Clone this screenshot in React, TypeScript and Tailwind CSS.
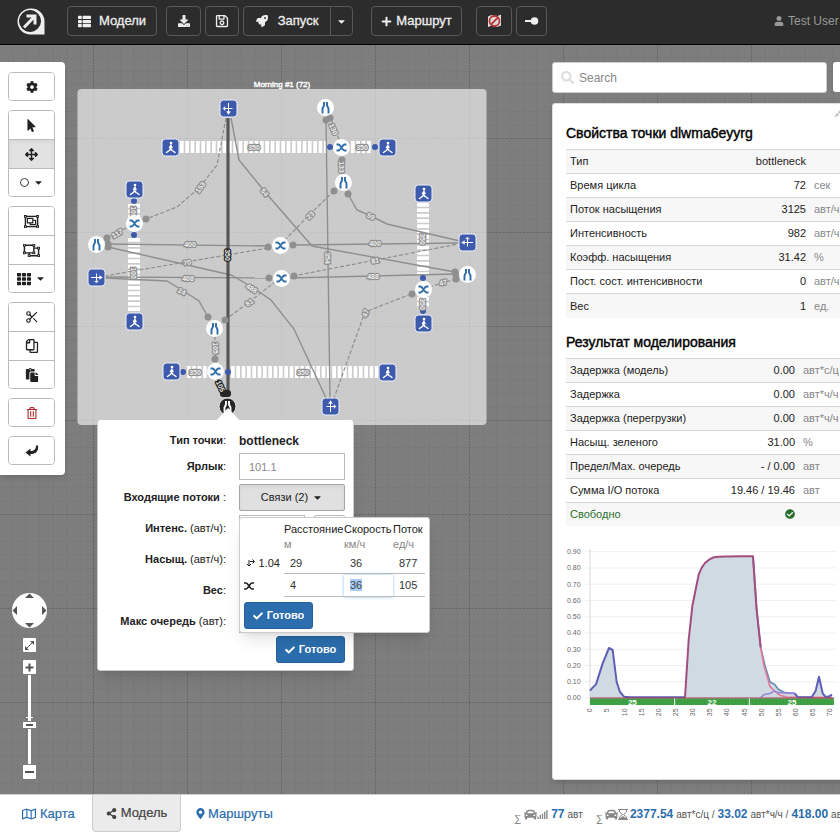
import { useEffect, useRef } from "react";
import type { ReactNode } from "react";
import {
  FaArrowsAlt, FaCar, FaCaretDown, FaCheck, FaCheckCircle, FaCog, FaDownload,
  FaMapMarkerAlt, FaMousePointer, FaPaste, FaPlus, FaRegCircle, FaRegCopy, FaRegMap,
  FaRegObjectGroup, FaRegObjectUngroup, FaRegSave, FaRegTrashAlt, FaRocket, FaSearch, FaShareAlt,
  FaSignal, FaTh, FaThList, FaUser, FaCompressAlt,
} from "react-icons/fa";
import { Scissors } from "lucide-react";

type Point = [number, number];
type NodeKind = "ped" | "right" | "left" | "up" | "down";

/* ---------- network diagram data ---------- */

const squares: { at: Point; kind: NodeKind }[] = [
  { at: [228, 108], kind: "down" },
  { at: [170, 147], kind: "ped" },
  { at: [387, 147], kind: "ped" },
  { at: [134, 189], kind: "ped" },
  { at: [423, 193], kind: "ped" },
  { at: [467, 242], kind: "left" },
  { at: [96, 277], kind: "right" },
  { at: [134, 321], kind: "ped" },
  { at: [423, 323], kind: "ped" },
  { at: [171, 371], kind: "ped" },
  { at: [387, 372], kind: "ped" },
  { at: [330, 406], kind: "up" },
];

const bottles: Point[] = [[325, 107], [343, 182], [96, 244], [467, 274], [214, 328]];
const crosses: Point[] = [[341, 147], [134, 223], [280, 245], [281, 278], [423, 289], [215, 371]];

const crosswalks: { from: Point; to: Point }[] = [
  { from: [180, 147], to: [327, 147] },
  { from: [351, 147], to: [372, 147] },
  { from: [134, 204], to: [134, 217] },
  { from: [134, 238], to: [134, 311] },
  { from: [423, 203], to: [423, 275] },
  { from: [423, 297], to: [423, 308] },
  { from: [187, 372], to: [208, 372] },
  { from: [231, 372], to: [378, 372] },
];

const links: { d: string; dashed?: boolean }[] = [
  { d: "M226 118L217 165L199 188L177 207L146 219", dashed: true },
  { d: "M231 118L239 160L265 192L312 246L455 272" },
  { d: "M326 118L330 398" },
  { d: "M331 119L340 142", dashed: true },
  { d: "M342 158V174" },
  { d: "M334 191L310 214L285 240", dashed: true },
  { d: "M348 194L357 210L371 216L387 224L460 241" },
  { d: "M293 245L458 243" },
  { d: "M293 276L458 244", dashed: true },
  { d: "M289 278L456 274" },
  { d: "M456 279L432 286", dashed: true },
  { d: "M411 294L365 312L334 398", dashed: true },
  { d: "M108 244L270 246" },
  { d: "M104 276L268 248", dashed: true },
  { d: "M105 277L270 278" },
  { d: "M108 247L231 275L252 287L271 300L294 329L326 398" },
  { d: "M105 278L167 281L182 290L199 301L208 317" },
  { d: "M225 320L249 302L275 282", dashed: true },
  { d: "M107 238L126 228", dashed: true },
  { d: "M215 336V359", dashed: true },
];

const ports: Point[] = [
  [326, 120], [330, 118], [342, 160], [334, 191], [348, 194], [146, 219], [107, 238], [108, 244],
  [108, 247], [268, 247], [293, 245], [269, 278], [294, 276], [455, 272], [456, 275], [456, 279],
  [412, 294], [208, 317], [225, 320], [215, 359],
];

const walkPorts: Point[] = [
  [330, 147], [375, 147], [134, 201], [134, 235], [423, 278], [423, 311], [183, 372], [228, 372],
];

const flowLabels: { at: Point; text: string; turn: number }[] = [
  { at: [200, 187], text: "153", turn: -55 },
  { at: [265, 192], text: "54", turn: 50 },
  { at: [328, 258], text: "354", turn: 90 },
  { at: [334, 129], text: "130", turn: 68 },
  { at: [342, 167], text: "133", turn: 90 },
  { at: [310, 215], text: "23", turn: -45 },
  { at: [371, 216], text: "59", turn: 25 },
  { at: [375, 243], text: "400", turn: 0 },
  { at: [375, 260], text: "81", turn: -10 },
  { at: [373, 276], text: "488", turn: 0 },
  { at: [443, 282], text: "47", turn: -15 },
  { at: [365, 313], text: "47", turn: -70 },
  { at: [190, 244], text: "400", turn: 0 },
  { at: [187, 262], text: "70", turn: -10 },
  { at: [188, 278], text: "408", turn: 0 },
  { at: [252, 288], text: "488", turn: 32 },
  { at: [182, 291], text: "24", turn: 25 },
  { at: [249, 302], text: "81", turn: -35 },
  { at: [117, 233], text: "117", turn: -30 },
  { at: [216, 348], text: "105", turn: 90 },
  { at: [254, 147], text: "350", turn: 0 },
  { at: [362, 147], text: "350", turn: 0 },
  { at: [134, 212], text: "100", turn: 90 },
  { at: [134, 273], text: "100", turn: 90 },
  { at: [423, 239], text: "350", turn: 90 },
  { at: [423, 304], text: "350", turn: 90 },
  { at: [195, 372], text: "350", turn: 0 },
  { at: [303, 372], text: "350", turn: 0 },
];

function SquareNode({ at, kind }: { at: Point; kind: NodeKind }) {
  const turn = { ped: 0, right: 0, left: 180, up: -90, down: 90 }[kind];
  return (
    <g transform={`translate(${at[0] + 0.5} ${at[1] + 0.5})`}>
      <rect x="-8.500" y="-8.500" width="17" height="17" rx="3.500" fill="#3d5aad" stroke="#eef1fb" />
      {kind === "ped" ? (
        <g stroke="#fff" fill="none" strokeWidth="1.500" strokeLinecap="round" strokeLinejoin="round">
          <circle cx="0.500" cy="-4.500" r="0.600" fill="#fff" />
          <path d="M0.500 -2.500L0 1L1.500 3M0 1L-1 3M0.500 -2L-1 0M0.500 -2L1.500 0" />
          <path d="M-4 5L-2 3.500M2.500 3.500L4.500 5" />
        </g>
      ) : (
        <g transform={`rotate(${turn})`} stroke="#fff" fill="#fff" strokeWidth="1">
          <path d="M-5.500 0H4M0 -4V4" fill="none" />
          <path d="M3 -2L6 0L3 2ZM-2 3.500L0 5.500L2 3.500Z" strokeWidth="0.300" />
        </g>
      )}
    </g>
  );
}

function Bottle({ at, dark }: { at: Point; dark?: boolean }) {
  return (
    <g transform={`translate(${at[0] + 0.5} ${at[1] + 0.5})`}>
      <circle r="8.500" fill={dark ? "#262626" : "#fff"} stroke={dark ? "#e8e8e8" : "none"} strokeWidth="1" />
      <path
        d="M-1.500 -5.500V-2L-3 1V6M1.500 -5.500V-2L3 1V6"
        fill="none"
        stroke={dark ? "#fff" : "#2d6da8"}
        strokeWidth="1.900"
      />
    </g>
  );
}

function FlowLabel({ at, text, turn, dark }: { at: Point; text: string; turn: number; dark?: boolean }) {
  return (
    <text
      transform={`translate(${at[0]} ${at[1]}) rotate(${turn})`}
      y="3"
      textAnchor="middle"
      fontSize="7"
      fontWeight="bold"
      paintOrder="stroke"
      stroke={dark ? "#222" : "#8f8f8f"}
      strokeWidth="2.500"
      strokeLinejoin="round"
      fill="#eee"
    >
      {text}
    </text>
  );
}

/* The model canvas; node positions are given in window coordinates. */
function ModelCanvas() {
  return (
    <svg className="absolute inset-0 h-full w-full" aria-label="Morning #1" role="img">
      <defs>
        <pattern id="weave" width="4" height="4" patternUnits="userSpaceOnUse">
          <rect width="4" height="4" fill="#7e7e7e" />
          <path d="M0 0h1v1h-1zM2 2h1v1h-1z" fill="#767676" />
          <path d="M2 0h1v1h-1zM0 2h1v1h-1z" fill="#848484" />
        </pattern>
        <pattern id="minor" x="93" y="93" width="13.430" height="13.430" patternUnits="userSpaceOnUse">
          <path d="M0.500 0V13.430M0 0.500H13.430" stroke="#000" strokeOpacity="0.040" fill="none" />
        </pattern>
        <pattern id="major" x="93" y="93" width="94" height="94" patternUnits="userSpaceOnUse">
          <path d="M0.500 0V94M0 0.500H94" stroke="#000" strokeOpacity="0.120" strokeDasharray="2 1" fill="none" />
        </pattern>
      </defs>
      <rect width="100%" height="100%" fill="url(#weave)" />
      <rect width="100%" height="100%" fill="url(#minor)" />
      <rect width="100%" height="100%" fill="url(#major)" />
      <g transform="translate(0 -45)" fontFamily="Liberation Sans, Arial, sans-serif">
        <rect x="77.500" y="89" width="409" height="336" rx="4" fill="#fff" fillOpacity="0.600" />
        <text x="282" y="87" textAnchor="middle" fontSize="8" fill="#fff" stroke="#fff" strokeWidth="0.400">
          Morning #1 (72)
        </text>
        {crosswalks.map(({ from, to }, i) => (
          <line
            key={i} x1={from[0]} y1={from[1]} x2={to[0]} y2={to[1]}
            stroke="#fff" strokeWidth="12" strokeDasharray="3.700 1.630"
          />
        ))}
        {links.map(({ d, dashed }, i) => (
          <path
            key={i} d={d} fill="none" stroke="#8f8f8f" strokeWidth={dashed ? 1.2 : 1.4}
            strokeDasharray={dashed ? "4 2" : undefined}
          />
        ))}
        <path d="M228 118V392" stroke="#444" strokeWidth="3" />
        <path d="M228 118V392" stroke="#666" strokeWidth="1" />
        <path d="M217 378L225 392" stroke="#222" strokeWidth="2" strokeDasharray="3 2" />
        {ports.map(([x, y], i) => <circle key={i} cx={x} cy={y} r="3.500" fill="#8f8f8f" />)}
        {walkPorts.map(([x, y], i) => <circle key={i} cx={x} cy={y} r="3" fill="#3d5aad" />)}
        <rect x="220" y="390" width="11" height="7" rx="3" fill="#262626" />
        {flowLabels.map((label, i) => <FlowLabel key={i} {...label} />)}
        <FlowLabel at={[228, 255]} text="350" turn={90} dark />
        <FlowLabel at={[221, 386]} text="105" turn={65} dark />
        {squares.map((node, i) => <SquareNode key={i} {...node} />)}
        {bottles.map((at, i) => <Bottle key={i} at={at} />)}
        <Bottle at={[227, 406]} dark />
        {crosses.map(([x, y], i) => (
          <g key={i} transform={`translate(${x + 0.5} ${y + 0.5})`}>
            <circle r="8.500" fill="#fff" />
            <path
              d="M-5 -3H-3C-1 -3 1 3 3 3H5M-5 3H-3C-1 3 1 -3 3 -3H5"
              fill="none" stroke="#2d6da8" strokeWidth="1.800"
            />
          </g>
        ))}
      </g>
    </svg>
  );
}

/* ---------- header ---------- */

function DarkButton({ label, className, children }: { label?: string; className: string; children: ReactNode }) {
  return (
    <button
      type="button"
      aria-label={label}
      className={`flex h-[30px] items-center justify-center rounded border border-[#575757] text-[13px] text-[#eee] [-webkit-text-stroke:0.3px_#eee] ${className}`}
    >
      {children}
    </button>
  );
}

function Header() {
  return (
    <header className="flex h-[45px] shrink-0 items-start overflow-hidden border-b border-black bg-[#2c2c2c] pt-[6px] pl-[16px] whitespace-nowrap">
      <a href="#home" aria-label="Home" className="mr-[22px] shrink-0">
        <svg width="29" height="30" viewBox="0 0 29 30">
          <path d="M14.500 2.500A13 13 0 1 0 14.500 28.500H28.500V15.500A13 13 0 0 0 14.500 2.500Z" fill="#eee" />
          <circle cx="14" cy="15" r="10.500" fill="#2c2c2c" stroke="#2c2c2c" />
          <path d="M8 21.500L18.500 10.500M10.500 10H19V18.500" fill="none" stroke="#eee" strokeWidth="3" />
        </svg>
      </a>
      <DarkButton className="mr-[9px] w-[90px] gap-2"><FaThList size={13} />Модели</DarkButton>
      <DarkButton label="Download" className="mr-[4px] w-[35px]"><FaDownload size={12} /></DarkButton>
      <DarkButton label="Save" className="mr-[4px] w-[34px]"><FaRegSave size={14} /></DarkButton>
      <DarkButton className="w-[88px] gap-[10px] rounded-r-none"><FaRocket size={12} />Запуск</DarkButton>
      <DarkButton label="Run options" className="-ml-px mr-[18px] w-[23px] rounded-l-none"><FaCaretDown size={11} /></DarkButton>
      <DarkButton className="mr-[14px] w-[91px] gap-1"><FaPlus size={11} />Маршрут</DarkButton>
      <DarkButton label="Hide map" className="mr-[4px] w-[36px]">
        <svg width="15" height="14" viewBox="0 0 15 14">
          <path d="M1 2.500L4.500 1L9.500 2.500L14 0.500V11.500L10 13L5 11.500L1 13Z" fill="#ddd" />
          <circle cx="7.500" cy="7" r="5" fill="none" stroke="#b8393b" strokeWidth="1.800" />
          <path d="M4 10.500L11 3.500" stroke="#b8393b" strokeWidth="1.800" />
        </svg>
      </DarkButton>
      <DarkButton label="Points" className="w-[31px]">
        <svg width="14" height="10" viewBox="0 0 14 10"><path d="M0 5H7" stroke="#eee" strokeWidth="2" /><circle cx="9.500" cy="5" r="3.800" fill="#eee" /></svg>
      </DarkButton>
      <a href="#user" className="ml-auto flex h-[30px] w-[66px] shrink-0 items-center gap-1 text-[12px] text-[#999]">
        <FaUser size={10} className="shrink-0" />Test User
      </a>
    </header>
  );
}

/* ---------- left tools ---------- */

function EnterArrow() {
  return (
    <svg width="14" height="12" viewBox="0 0 14 12" fill="#222">
      <path d="M0.500 7.500L5.500 3.500V6C9 6 11 4.500 11 0.500H13C14 6.500 10.500 9 5.500 9V11.500Z" />
    </svg>
  );
}

const toolGroups: { label: string; icon: ReactNode; active?: boolean; menu?: boolean }[][] = [
  [{ label: "Settings", icon: <FaCog size={12} /> }],
  [
    { label: "Select", icon: <FaMousePointer size={13} /> },
    { label: "Move", icon: <FaArrowsAlt size={13} />, active: true },
    { label: "Shape", icon: <FaRegCircle size={9} />, menu: true },
  ],
  [
    { label: "Group", icon: <FaRegObjectGroup size={15} /> },
    { label: "Ungroup", icon: <FaRegObjectUngroup size={17} /> },
    { label: "Grid", icon: <FaTh size={14} />, menu: true },
  ],
  [
    { label: "Cut", icon: <Scissors size={14} strokeWidth={2} /> },
    { label: "Copy", icon: <FaRegCopy size={14} className="-scale-x-100" /> },
    { label: "Paste", icon: <FaPaste size={14} /> },
  ],
  [{ label: "Delete", icon: <FaRegTrashAlt size={12} className="text-[#b0282a]" /> }],
  [{ label: "Enter", icon: <EnterArrow /> }],
];

function Toolbar() {
  return (
    <div role="toolbar" className="flex w-[65px] flex-col gap-[9px] rounded-r bg-white px-2 py-[10px] shadow-md">
      {toolGroups.map((group, g) => (
        <div key={g} className="w-[47px] overflow-hidden rounded border border-[#bbb]">
          {group.map((tool, i) => (
            <button
              key={tool.label}
              type="button"
              aria-label={tool.label}
              className={`flex w-full items-center justify-center gap-1 text-[#222] ${
                group.length === 1 ? "h-[27px]" : i === 1 ? "h-[29px]" : "h-[28px]"
              } ${i > 0 ? "border-t border-[#bbb]" : ""} ${tool.active ? "bg-[#e2e2e2] shadow-inner" : "bg-white"}`}
            >
              {tool.icon}
              {tool.menu && <FaCaretDown size={11} />}
            </button>
          ))}
        </div>
      ))}
    </div>
  );
}

function ZoomControls() {
  const box = "flex h-[14px] w-[13px] items-center justify-center rounded-[1px] bg-white text-[#555]";
  return (
    <div className="ml-[12px] flex w-[35px] flex-col items-center pb-px">
      <button type="button" aria-label="Pan" className="h-[35px] w-[35px] rounded-full bg-white">
        <svg width="35" height="35" viewBox="0 0 35 35" fill="#555">
          <path d="M17.500 0.500L22 5H13ZM17.500 34.500L22 30H13ZM0.500 17.500L5 13V22ZM34.500 17.500L30 13V22Z" />
        </svg>
      </button>
      <button type="button" aria-label="Fit" className={`${box} mt-[10px]`}>
        <svg width="11" height="11" viewBox="0 0 11 11" fill="#555"><path d="M2 9L9 2" stroke="#555" /><path d="M6 1H10V5ZM1 6V10H5Z" /></svg>
      </button>
      <button type="button" aria-label="Zoom in" className={`${box} mt-[8px]`}>
        <svg width="9" height="9" viewBox="0 0 9 9" stroke="#555" strokeWidth="2"><path d="M0.500 4.500H8.500M4.500 0.500V8.500" /></svg>
      </button>
      <svg width="13" height="91" viewBox="0 0 13 91" role="img" aria-label="Zoom level">
        <path d="M5 1H8V47H5ZM5 55H8V90H5ZM3 43H10V44H3Z" fill="#fff" />
        <rect y="48" width="13" height="6" fill="#fff" />
        <rect x="3" y="50" width="7" height="2" fill="#555" />
      </svg>
      <button type="button" aria-label="Zoom out" className={box}>
        <svg width="9" height="3" viewBox="0 0 9 3"><rect width="9" height="2" fill="#555" /></svg>
      </button>
    </div>
  );
}

/* ---------- point editor ---------- */

const cell = "h-[22px] w-full border-b border-[#bbb] bg-white pl-[6px] text-[11px] text-[#333] outline-none";
const okButton = "flex h-[27px] w-[69px] items-center justify-center gap-1 rounded-[3px] border border-[#24609b] bg-[#2b6dad] text-[11px] font-bold text-white";
const field = "h-[27px] min-w-0 border border-[#bbb] bg-white px-[9px] text-[11px] text-[#555] placeholder:text-[#888]";

function LinksMenu() {
  const speed = useRef<HTMLInputElement>(null);
  useEffect(() => {
    speed.current?.focus();
    speed.current?.select();
  }, []);
  return (
    <div className="absolute top-[97px] left-[141px] w-[191px] rounded-[3px] border border-[#ccc] bg-white px-1 pt-[3px] pb-[3px] shadow-lg">
      <table className="w-full table-fixed text-left text-[11px] text-[#222]">
        <colgroup><col className="w-[40px]" /><col className="w-[60px]" /><col className="w-[49px]" /><col /></colgroup>
        <thead>
          <tr className="h-[16px] align-top leading-[16px]">
            <th aria-label="Связь" />
            <th className="font-normal">Расстояние</th>
            <th className="font-normal">Скорость</th>
            <th className="font-normal">Поток</th>
          </tr>
          <tr className="h-[15px] leading-[15px] text-[#888]">
            <td />
            <td>м</td>
            <td>км/ч</td>
            <td>ед/ч</td>
          </tr>
        </thead>
        <tbody>
          <tr className="h-[22px]">
            <th className="font-normal">
              <span className="flex items-center justify-end gap-1 pr-1">
                <svg width="9" height="8" viewBox="0 0 9 8" fill="none" stroke="#222"><path d="M3 1V7M1 5L3 7L5 5M4 2.500H8M6.500 0.500L8.500 2.500L6.500 4.500" /></svg>
                1.04
              </span>
            </th>
            <td><input aria-label="Расстояние 1" defaultValue="29" className={cell} /></td>
            <td><input aria-label="Скорость 1" defaultValue="36" className={cell} /></td>
            <td><input aria-label="Поток 1" defaultValue="877" className={cell} /></td>
          </tr>
          <tr className="h-[23px]">
            <th>
              <svg width="10" height="8" viewBox="0 0 10 8" fill="none" stroke="#222" strokeWidth="1.500">
                <path d="M0 1H2C4 1 6 7 8 7H10M0 7H2C4 7 6 1 8 1H10" />
              </svg>
            </th>
            <td><input aria-label="Расстояние 2" defaultValue="4" className={cell} /></td>
            <td>
              <input
                ref={speed} aria-label="Скорость 2" defaultValue="36"
                className={`${cell} relative border-[#a9cdee] shadow-[0_0_3px_#8cc0f0] selection:bg-[#a6cbf7] selection:text-[#444]`}
              />
            </td>
            <td><input aria-label="Поток 2" defaultValue="105" className={cell} /></td>
          </tr>
        </tbody>
      </table>
      <button type="button" className={`${okButton} mt-[5px]`}><FaCheck size={10} />Готово</button>
    </div>
  );
}

function FormRow({ id, name, unit, children }: { id: string; name: string; unit?: string; children: ReactNode }) {
  return (
    <div className="flex h-[27px] items-center gap-[13px]">
      <label htmlFor={id} className="w-[120px] shrink-0 text-right text-[11px] whitespace-nowrap text-[#222]">
        <b>{name}</b>{unit}:
      </label>
      {children}
    </div>
  );
}

function PointEditor() {
  return (
    <div className="absolute top-[374px] left-[97px] w-[257px] rounded-[3px] border border-[#ccc] bg-white p-[7px] shadow-lg">
      <svg className="absolute -top-[12px] left-[118px]" width="24" height="13" viewBox="0 0 24 13"><path d="M12 0L24 13H0Z" fill="#fff" /></svg>
      <form className="flex flex-col gap-1 px-px" onSubmit={(e) => e.preventDefault()}>
        <div className="-mb-[5px]">
          <FormRow id="kind" name="Тип точки">
            <output id="kind" className="text-[12px] font-bold text-[#222]">bottleneck</output>
          </FormRow>
        </div>
        <FormRow id="tag" name="Ярлык"><input id="tag" placeholder="101.1" className={`${field} flex-1`} /></FormRow>
        <FormRow id="incoming" name="Входящие потоки ">
          <button id="incoming" type="button" className="flex h-[27px] flex-1 items-center justify-center gap-1 rounded-[2px] border border-[#a5a5a5] bg-[#e0e0e0] text-[11px] text-[#222] shadow-inner">
            Связи (2)<FaCaretDown size={11} />
          </button>
        </FormRow>
        <FormRow id="intensity" name="Интенс." unit=" (авт/ч)">
          <input id="intensity" className={`${field} flex-1`} />
          <button type="button" aria-label="Рассчитать" className="-ml-1 h-[27px] w-[31px] rounded-[2px] border border-[#bbb]" />
        </FormRow>
        <FormRow id="saturation" name="Насыщ." unit=" (авт/ч)"><input id="saturation" className={`${field} flex-1`} /></FormRow>
        <FormRow id="weight" name="Вес"><input id="weight" className={`${field} flex-1`} /></FormRow>
        <div className="-mb-[3px]">
          <FormRow id="queue" name="Макс очередь" unit=" (авт)">
            <input id="queue" className="h-[23px] min-w-0 flex-1 border border-[#bbb] bg-white px-[9px] text-[11px]" />
          </FormRow>
        </div>
        <button type="submit" className={`${okButton} mr-0 ml-auto`}><FaCheck size={10} />Готово</button>
      </form>
      <LinksMenu />
    </div>
  );
}

/* ---------- right panel ---------- */

type Row = { name: string; value: ReactNode; unit: string; good?: boolean };

const properties: Row[] = [
  { name: "Тип", value: "bottleneck", unit: "" },
  { name: "Время цикла", value: "72", unit: "сек" },
  { name: "Поток насыщения", value: "3125", unit: "авт/ч" },
  { name: "Интенсивность", value: "982", unit: "авт/ч" },
  { name: "Коэфф. насыщения", value: "31.42", unit: "%" },
  { name: "Пост. сост. интенсивности", value: "0", unit: "авт/ч" },
  { name: "Вес", value: "1", unit: "ед." },
];

const results: Row[] = [
  { name: "Задержка (модель)", value: "0.00", unit: "авт*с/ц" },
  { name: "Задержка", value: "0.00", unit: "авт*ч/ч" },
  { name: "Задержка (перегрузки)", value: "0.00", unit: "авт*ч/ч" },
  { name: "Насыщ. зеленого", value: "31.00", unit: "%" },
  { name: "Предел/Мах. очередь", value: "- / 0.00", unit: "авт" },
  { name: "Сумма I/O потока", value: "19.46 / 19.46", unit: "авт" },
  { name: "Свободно", value: <FaCheckCircle size={10} className="mr-0 ml-auto" />, unit: "", good: true },
];

function DataTable({ rows, unitColumn }: { rows: Row[]; unitColumn: string }) {
  return (
    <table className="w-full text-[11px] whitespace-nowrap text-[#222]">
      <tbody>
        {rows.map((row) => (
          <tr key={row.name} className={`h-[24px] border-t border-[#d5d5d5] odd:bg-[#f7f7f7] ${row.good ? "text-[#2a6e2e]" : ""}`}>
            <th scope="row" className="pl-1 text-left font-normal">{row.name}</th>
            <td className="text-right">{row.value}</td>
            <td className={`${unitColumn} pl-2 text-left text-[#888]`}>{row.unit}</td>
          </tr>
        ))}
      </tbody>
    </table>
  );
}

const yTicks = ["0.90", "0.80", "0.70", "0.60", "0.50", "0.40", "0.30", "0.20", "0.10", "0.00"];
const xTicks = Array.from({ length: 15 }, (_, i) => i * 5);

/* Flow profile over one cycle, drawn at three units per pixel. */
function FlowChart() {
  const rise = "L386 330L397 228L416 134C425 108 440 88 462 82C490 78 530 79 579 79";
  return (
    <svg className="mt-[16px] shrink-0" width="280" height="190" viewBox="18 36 840 570" fontFamily="Liberation Sans, Arial, sans-serif" role="img" aria-label="График потока">
      {yTicks.map((tick, i) => (
        <g key={tick}>
          <path d={`M76 ${65 + i * 48.8}H828`} stroke="#ececec" strokeWidth="2.500" />
          <text x="62" y={72 + i * 48.8} textAnchor="end" fontSize="21" fill="#666">{tick}</text>
        </g>
      ))}
      <path d="M90 56V525" stroke="#d8d8d8" strokeWidth="3" />
      <path
        d={`M90 504V482L98 473L108 463L128 400L147 354L158 360L170 456L180 486L192 500L210 504H375${rise}L590 240L602 352L615 407L630 456L644 463L655 478L675 488L704 490L714 502L755 502L767 482L777 440L788 490L796 500L816 494V504Z`}
        fill="#cfdae3"
      />
      <path d="M579 79L590 240L602 352L615 407L630 456L644 463L655 478L675 488L704 490" fill="none" stroke="#5f8fb0" strokeWidth="5" />
      <path d="M602 352L612 407L630 470L645 484L660 496L680 501L816 503" fill="none" stroke="#e8779a" strokeWidth="5" />
      <path d="M602 503L612 494L632 490L642 483L655 488L704 490" fill="none" stroke="#9e86d6" strokeWidth="5" />
      <path d="M90 482L98 473L108 463L128 400L147 354L158 360L170 456L180 486L192 500L210 502H375" fill="none" stroke="#5f5fb5" strokeWidth="6" strokeLinejoin="round" />
      <path d="M704 490L714 502H755L767 482L777 440L788 490L796 500L806 500L816 494" fill="none" stroke="#5f5fb5" strokeWidth="6" strokeLinejoin="round" />
      <path d={`M375 502${rise}L590 240L602 352`} fill="none" stroke="#a34c80" strokeWidth="6" strokeLinejoin="round" />
      <rect x="90" y="505" width="732" height="20" fill="#3fa244" />
      <path d="M95 517H822" stroke="#379a3d" strokeWidth="16" strokeDasharray="2 8.260" />
      <path d="M90 504H822" stroke="#a03c50" strokeWidth="3" />
      <path d="M344 505V525M568 505V525" stroke="#fff" strokeWidth="3" />
      <g fill="#fff" fontSize="24" fontWeight="bold" textAnchor="middle">
        <text x="217" y="525">25</text>
        <text x="456" y="525">22</text>
        <text x="696" y="525">25</text>
      </g>
      {xTicks.map((tick, i) => (
        <text key={tick} transform={`translate(${97 + i * 51.4} 535) rotate(-90)`} textAnchor="end" fontSize="21" fill="#666">
          {tick}
        </text>
      ))}
    </svg>
  );
}

function SidePanel() {
  const heading = "text-[14px] leading-[18px] text-black [-webkit-text-stroke:0.4px_black]";
  return (
    <aside className="relative -mr-[26px] ml-auto flex w-[314px] shrink-0 flex-col gap-[10px]">
      <div className="flex gap-[6px]">
        <div className="flex h-[31px] w-[275px] shrink-0 items-center gap-[5px] rounded-[3px] border border-[#ccc] bg-white pl-[8px]">
          <FaSearch size={13} className="shrink-0 text-[#ddd]" />
          <input type="search" aria-label="Search" placeholder="Search" className="w-full text-[12px] outline-none placeholder:text-[#888]" />
        </div>
        <button type="button" aria-label="Menu" className="h-[30px] flex-1 rounded-[3px] bg-white" />
      </div>
      <section className="relative flex flex-1 flex-col rounded-[3px] border border-[#ddd] bg-white px-[13px] pt-[20px] shadow-md">
        <button type="button" aria-label="Collapse" className="absolute top-[5px] left-[281px] text-[#bbb]"><FaCompressAlt size={9} /></button>
        <h2 className={heading}>Свойства точки dlwma6eyyrg</h2>
        <div className="mt-[7px]"><DataTable rows={properties} unitColumn="w-[46px]" /></div>
        <h2 className={`${heading} mt-[15px]`}>Результат моделирования</h2>
        <div className="mt-[7px]"><DataTable rows={results} unitColumn="w-[57px]" /></div>
        <FlowChart />
      </section>
    </aside>
  );
}

/* ---------- footer ---------- */

function Footer() {
  const sum = <span className="mt-[8px] text-[10px] text-[#777]">∑</span>;
  const num = "font-bold text-[#2b6dad]";
  const unit = "text-[10px]";
  return (
    <footer className="flex h-[44px] shrink-0 items-start overflow-hidden border-t border-[#ccc] bg-white text-[13px] whitespace-nowrap">
      <nav className="flex h-[37px] text-[#2b6dad] [-webkit-text-stroke:0.2px]">
        <a href="#map" className="flex w-[92px] items-center gap-1 pl-[22px]"><FaRegMap size={14} />Карта</a>
        <a href="#model" className="flex w-[89px] items-center justify-center gap-1 rounded-b border border-t-0 border-[#ccc] bg-[#ebebeb] text-[#444]">
          <FaShareAlt size={11} />Модель
        </a>
        <a href="#routes" className="flex items-center gap-[2px] pl-[14px]"><FaMapMarkerAlt size={11} />Маршруты</a>
      </nav>
      <div className="ml-auto flex h-[38px] w-[326px] shrink-0 items-center text-[12px] text-[#555]">
        {sum}
        <FaCar size={13} className="ml-[3px] shrink-0 text-[#888]" />
        <FaSignal size={11} className="mr-[3px] shrink-0 text-[#888]" />
        <b className={num}>77</b>
        <span className={`${unit} ml-[3px]`}>авт</span>
        <span className="ml-[13px] flex items-center">{sum}</span>
        <FaCar size={13} className="ml-[2px] shrink-0 text-[#888]" />
        <svg width="10" height="11" viewBox="0 0 10 11" className="mr-[2px] shrink-0">
          <path d="M0 0.500H10M0 10.500H10M1.500 1V3L4.500 5.500L1.500 8V10M8.500 1V3L5.500 5.500L8.500 8V10" fill="none" stroke="#888" />
          <path d="M2 10V9L5 7L8 9V10Z" fill="#888" />
        </svg>
        <b className={num}>2377.54</b>
        <span className={`${unit} mx-[3px]`}>авт*с/ц /</span>
        <b className={num}>33.02</b>
        <span className={`${unit} mx-[3px]`}>авт*ч/ч /</span>
        <b className={num}>418.00</b>
        <span className={`${unit} ml-[3px]`}>авт</span>
      </div>
    </footer>
  );
}

export default function App() {
  return (
    <div className="flex h-screen flex-col overflow-hidden bg-white font-['Liberation_Sans',Arial,sans-serif]">
      <Header />
      <main className="relative flex min-h-0 flex-1 overflow-hidden pt-[17px] pb-[14px]">
        <ModelCanvas />
        <div className="relative flex flex-col justify-between">
          <Toolbar />
          <ZoomControls />
        </div>
        <PointEditor />
        <SidePanel />
      </main>
      <Footer />
    </div>
  );
}
